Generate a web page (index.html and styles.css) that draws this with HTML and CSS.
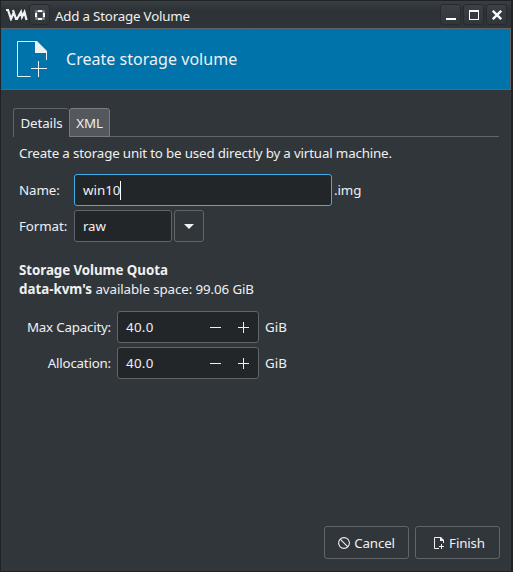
FILE: index.html
```html
<!DOCTYPE html>
<html lang="en">
<head>
<meta charset="utf-8">
<title>Add a Storage Volume</title>
<link rel="stylesheet" href="styles.css">
</head>
<body>
<div class="window">
  <header class="titlebar">
    <svg class="app-logo" width="23" height="12" viewBox="0 0 23 12"><path d="M1 1h2l3 9 3-7M8 1l3 9h1l4-7 1 5 2.500-5 2 8" fill="none" stroke="#eff0f1" stroke-width="2.200"/></svg>
    <button class="tbtn pin"><svg width="10" height="10" viewBox="0 0 10 10"><path d="M1.300 1.300h7.400v7.400H1.300z" fill="none" stroke="#888c8f" stroke-width="2"/><path d="M3 1h4M3 9h4M1 3v4M9 3v4" stroke="#fcfcfc" stroke-width="2"/></svg></button>
    <h1 class="title"><span>Add a Storage Volume</span></h1>
    <div class="controls">
      <button class="tbtn"><svg width="10" height="10" viewBox="0 0 10 10"><path d="M0 8h10v2H0z" fill="#fcfcfc"/></svg></button>
      <button class="tbtn"><svg width="10" height="10" viewBox="0 0 10 10"><path d="M0 0h10v10H0zM1 2v7h8V2z" fill="#fcfcfc" fill-rule="evenodd"/></svg></button>
      <button class="tbtn"><svg width="10" height="10" viewBox="0 0 10 10"><path d="M.8.8l8.400 8.400M9.200.8L.8 9.200" stroke="#fcfcfc" stroke-width="2.300"/></svg></button>
    </div>
  </header>
  <div class="banner">
    <svg class="banner-icon" width="32" height="38" viewBox="0 0 32 38"><path d="M13.500 35.500H.5V.5H19" fill="none" stroke="#eff0f1"/><path d="M18 0h2l10 10v9h-1v-7H18z" fill="#eff0f1"/><path d="M14 27.500h16M21.500 20v16" stroke="#eff0f1"/></svg>
    <h2>Create storage volume</h2>
  </div>
  <main class="content">
    <nav class="tabs"><div class="tab active">Details</div><div class="tab other">XML</div></nav>
    <section class="panel">
      <p class="intro">Create a storage unit to be used directly by a virtual machine.</p>
      <div class="row"><label class="label">Name:</label><div class="field name"><span>win10</span><i class="caret"></i></div><span class="suffix">.img</span></div>
      <div class="row"><label class="label">Format:</label><div class="field format">raw</div><button class="drop"><svg width="10" height="5" viewBox="0 0 10 5"><path d="M0 0h10L5 5z" fill="#eff0f1"/></svg></button></div>
      <div class="quota"><b>Storage Volume Quota</b></div>
      <div class="avail"><b>data-kvm's</b> <span>available space: 99.06 GiB</span></div>
      <div class="row spin-row"><label class="spin-label">Max Capacity:</label><div class="field spin"><span>40.0</span><svg width="40" height="11" viewBox="0 0 40 11"><path d="M0 5.500h11M28 5.500h11M33.500 0v11" stroke="#eff0f1"/></svg></div><span class="unit">GiB</span></div>
      <div class="row spin-row"><label class="spin-label">Allocation:</label><div class="field spin"><span>40.0</span><svg width="40" height="11" viewBox="0 0 40 11"><path d="M0 5.500h11M28 5.500h11M33.500 0v11" stroke="#eff0f1"/></svg></div><span class="unit">GiB</span></div>
    </section>
  </main>
  <footer class="actions">
    <button class="action"><svg width="12" height="12" viewBox="0 0 12 12"><circle cx="6" cy="6" r="5.400" fill="none" stroke="#eff0f1" stroke-width="1.100"/><path d="M2.200 2.200l7.600 7.600" stroke="#eff0f1" stroke-width="1.100"/></svg><span>Cancel</span></button>
    <button class="action finish"><svg width="12" height="12" viewBox="0 0 12 12"><path d="M6 11.500H1.500V.5H7" fill="none" stroke="#eff0f1"/><path d="M7 0h1l3 3v3h-1V4H7zM8 7h1v2h2v1H9v2H8v-2H6V9h2z" fill="#eff0f1"/></svg><span>Finish</span></button>
  </footer>
</div>
</body>
</html>
```
FILE: styles.css
```css
* { box-sizing: border-box; }
body { margin: 0; font-family: "Noto Sans", sans-serif; font-size: 13.333px; line-height: 18px; color: #eff0f1; background: #1b1e20; }
h1, h2, p { margin: 0; font-weight: 400; }
button { font: inherit; color: inherit; padding: 0; margin: 0; }
svg { display: block; flex: none; }
.window { width: 513px; height: 572px; display: flex; flex-direction: column; background: #31363b; border: 1px solid #202326; border-right-width: 2px; }
.titlebar { height: 27px; flex: none; display: flex; align-items: center; padding: 0 4px 0 4px; background: linear-gradient(#3a3f43, #2d3236 35%, #2f3438); }
.app-logo { margin-right: 1px; }
.tbtn { width: 21px; height: 21px; border: 1px solid #272b2e; border-radius: 3px; background: linear-gradient(#3b4147, #31363b); display: flex; align-items: center; justify-content: center; }
.title { font-size: 13.333px; line-height: 18px; margin-left: 5px; padding-top: 3px; letter-spacing: -0.2px; white-space: nowrap; }
.controls { margin-left: auto; display: flex; gap: 2px; }
.banner { height: 62px; flex: none; display: flex; align-items: center; background: #0073aa; border-top: 1px solid #606468; border-bottom: 1px solid #606468; border-right: 1px solid #606468; padding-left: 16px; }
.banner-icon { margin-top: 1px; }
.banner h2 { font-size: 16px; line-height: 22px; margin-left: 17px; letter-spacing: 0.03px; white-space: nowrap; }
.content { padding: 18px 12px 0; flex: 1; }
.tabs { height: 29px; display: flex; border-bottom: 1px solid #616569; letter-spacing: -0.1px; }
.tab { height: 29px; border: 1px solid #616569; border-radius: 3px 3px 0 0; line-height: 28px; text-align: center; }
.active { width: 56px; background: #31363b; border-bottom: 0; border-right: 0; }
.other { width: 41px; background: #54575b; border-color: #7a7d80; }
.panel { padding: 7px 6px 0; white-space: nowrap; }
.row { display: flex; align-items: center; height: 32px; margin-bottom: 4px; }
.intro { margin-bottom: 12px; letter-spacing: -0.16px; }
.label { width: 55px; letter-spacing: -0.1px; }
.field { height: 32px; border: 1px solid #616569; border-radius: 3px; background: #232629; display: flex; align-items: center; padding-left: 8px; }
.name { width: 258px; border-color: #3daee9; }
.caret { width: 1px; height: 19px; background: #fcfcfc; }
.suffix { margin-left: 2px; letter-spacing: -0.1px; }
.format { width: 98px; letter-spacing: -0.15px; }
.drop { width: 30px; height: 32px; margin-left: 2px; border: 1px solid #616569; border-radius: 3px; background: #31363b; display: flex; align-items: center; justify-content: center; }
.quota { margin-top: 19px; height: 19px; letter-spacing: -0.06px; }
.avail { height: 19px; margin-bottom: 12px; }
.avail span { letter-spacing: -0.1px; }
.spin-label { width: 92px; margin-right: 6px; text-align: right; letter-spacing: -0.2px; }
.spin { width: 142px; justify-content: space-between; padding-right: 8px; }
.spin span { letter-spacing: 0.3px; }
.unit { margin-left: 6px; }
.actions { display: flex; justify-content: flex-end; gap: 6px; padding: 0 11px 12px 0; }
.action { width: 85px; height: 33px; border: 1px solid #616569; border-radius: 3px; background: #31363b; display: flex; align-items: center; justify-content: center; gap: 4px; letter-spacing: -0.15px; }
.finish { padding-left: 3px; }
```
